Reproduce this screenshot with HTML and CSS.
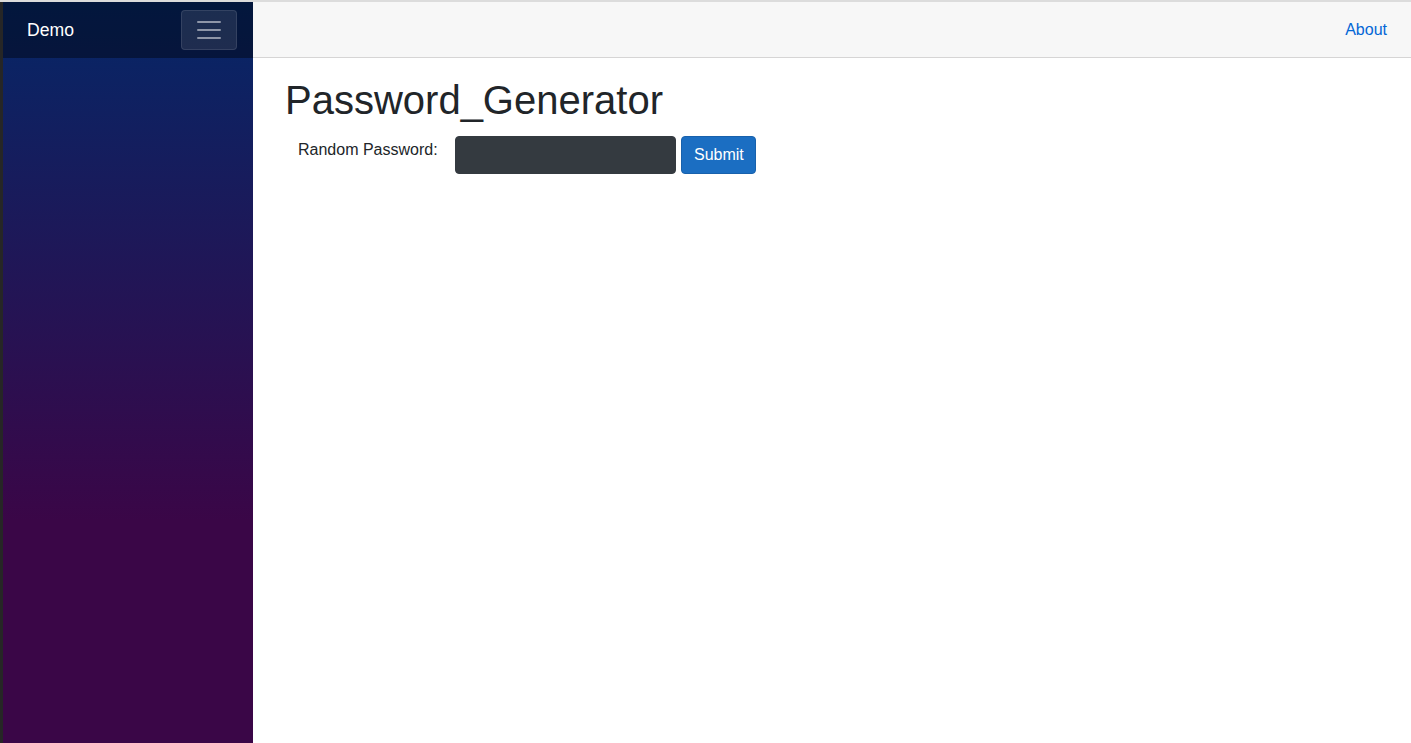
FILE: index.html
```html
<!DOCTYPE html>
<html lang="en">
<head>
<meta charset="utf-8">
<title>Password_Generator</title>
<link rel="stylesheet" href="styles.css">
</head>
<body>
<div class="page">
  <div class="edge"></div>
  <aside class="sidebar">
    <div class="side-top">
      <span class="brand">Demo</span>
      <button class="toggler" type="button" aria-label="Toggle navigation">
        <svg width="30" height="30" viewBox="0 0 30 30"><path d="M4 7h22M4 15h22M4 23h22" stroke="rgba(255,255,255,0.5)" stroke-width="2" stroke-linecap="round" stroke-miterlimit="10" fill="none"/></svg>
      </button>
    </div>
  </aside>
  <main class="main">
    <div class="top-row">
      <a class="about" href="#">About</a>
    </div>
    <div class="content">
      <h1 class="title">Password_Generator</h1>
      <div class="form-row">
        <label class="pw-label" for="pw">Random Password:</label>
        <input class="pw-input" id="pw" type="text">
        <button class="btn-submit" type="button">Submit</button>
      </div>
    </div>
  </main>
</div>
</body>
</html>
```

FILE: styles.css
```css
* { box-sizing: border-box; }
html, body { margin: 0; padding: 0; height: 100%; }
body {
  font-family: "Liberation Sans", Arial, Helvetica, sans-serif;
  font-size: 16px;
  color: #212529;
  background: #ffffff;
  border-top: 2px solid #dcdcdc;
  overflow: hidden;
}
.page {
  display: flex;
  height: 741px;
}
.edge {
  width: 3px;
  flex: none;
  background: #262626;
}
.sidebar {
  width: 250px;
  flex: none;
  background-image: linear-gradient(180deg, #052767 0%, #3a0647 70%);
}
.side-top {
  height: 56px;
  background-color: rgba(0, 0, 0, 0.4);
  display: flex;
  align-items: center;
  justify-content: space-between;
  padding: 0 16px 0 24px;
}
.brand {
  color: #ffffff;
  font-size: 17.6px;
}
.toggler {
  width: 56px;
  height: 40px;
  padding: 4px 12px;
  background-color: rgba(255, 255, 255, 0.1);
  border: 1px solid rgba(255, 255, 255, 0.1);
  border-radius: 4px;
  display: flex;
  align-items: center;
  justify-content: center;
}
.toggler svg { display: block; }
.main {
  flex: 1;
  display: flex;
  flex-direction: column;
}
.top-row {
  height: 56px;
  background-color: #f7f7f7;
  border-bottom: 1px solid #d6d5d5;
  display: flex;
  align-items: center;
  justify-content: flex-end;
  padding: 0 24px;
}
.about {
  color: #0366d6;
  text-decoration: none;
  font-size: 16px;
}
.content {
  padding: 17.6px 24px 0 32px;
}
.title {
  margin: 0 0 12px 0;
  font-size: 40px;
  font-weight: 500;
  line-height: 1.2;
}
.form-row {
  display: flex;
  align-items: flex-start;
}
.pw-label {
  padding-left: 13px;
  margin-top: 2px;
  width: 170px;
  line-height: 24px;
}
.pw-input {
  width: 221px;
  height: 38px;
  background-color: #343a40;
  border: 1px solid #343a40;
  border-radius: 4px;
  color: #fff;
  font-size: 16px;
  padding: 6px 12px;
}
.btn-submit {
  margin-left: 5px;
  width: 75px;
  height: 38px;
  background-color: #1b6ec2;
  border: 1px solid #1861ac;
  border-radius: 4px;
  color: #ffffff;
  font-family: "Liberation Sans", Arial, sans-serif;
  font-size: 16px;
  line-height: 24px;
  padding: 6px 12px;
}
```
